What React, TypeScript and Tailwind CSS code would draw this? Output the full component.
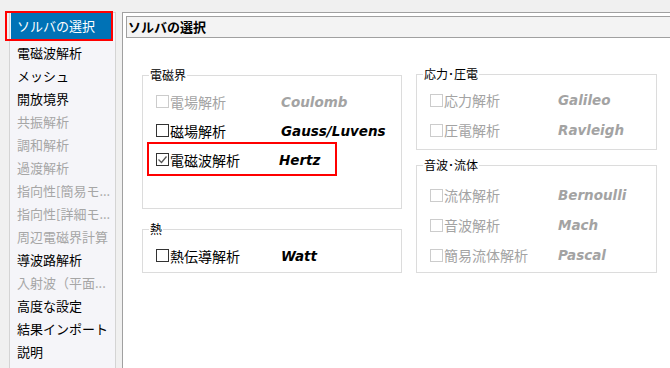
import React from "react";

const jp = { fontFamily: '"Noto Sans CJK JP", "Noto Sans", sans-serif' };
const latin = { fontFamily: '"DejaVu Sans", "Liberation Sans", sans-serif' };

type Item = { label: string; enabled: boolean };

const sideItems: Item[] = [
  { label: "電磁波解析", enabled: true },
  { label: "メッシュ", enabled: true },
  { label: "開放境界", enabled: true },
  { label: "共振解析", enabled: false },
  { label: "調和解析", enabled: false },
  { label: "過渡解析", enabled: false },
  { label: "指向性[簡易モ...", enabled: false },
  { label: "指向性[詳細モ...", enabled: false },
  { label: "周辺電磁界計算", enabled: false },
  { label: "導波路解析", enabled: true },
  { label: "入射波（平面...", enabled: false },
  { label: "高度な設定", enabled: true },
  { label: "結果インポート", enabled: true },
  { label: "説明", enabled: true },
];

function Checkbox({ enabled, checked }: { enabled: boolean; checked?: boolean }) {
  return (
    <span
      className={`w-[13px] h-[13px] shrink-0 border bg-white flex items-center justify-center ${
        enabled ? "border-[#333333]" : "border-[#cccccc]"
      }`}
    >
      {checked && (
        <svg width="11" height="11" viewBox="0 0 11 11">
          <polyline points="1.5,5.5 4.5,8.5 9.5,2.5" fill="none" stroke="#555555" strokeWidth="1.3" />
        </svg>
      )}
    </span>
  );
}

function Row({
  label,
  name,
  enabled,
  checked,
  labelW,
  h,
  children,
}: {
  label: string;
  name: string;
  enabled: boolean;
  checked?: boolean;
  labelW: number;
  h: string;
  children?: React.ReactNode;
}) {
  return (
    <div className={`relative flex items-center pl-[13px] ${h}`}>
      <Checkbox enabled={enabled} checked={checked} />
      <span
        className={`ml-[1px] text-[14px] leading-[18px] whitespace-nowrap ${enabled ? "text-black" : "text-[#a3a3a3]"}`}
        style={{ ...jp, width: labelW }}
      >
        {label}
      </span>
      <span
        className={`text-[13.5px] font-bold italic leading-[18px] whitespace-nowrap ${enabled ? "text-black" : "text-[#a3a3a3]"}`}
        style={latin}
      >
        {name}
      </span>
      {children}
    </div>
  );
}

function Group({
  title,
  className,
  children,
}: {
  title: string;
  className: string;
  children: React.ReactNode;
}) {
  return (
    <div className={`relative border border-[#dcdcdc] ${className}`}>
      <span
        className="absolute -top-[9px] left-[6px] bg-white px-[1px] text-[12px] leading-[16px] text-black"
        style={jp}
      >
        {title}
      </span>
      {children}
    </div>
  );
}

export default function App() {
  return (
    <div className="w-[670px] h-[368px] overflow-hidden bg-[#f0f0f0] flex" style={jp}>
      {/* Sidebar */}
      <div className="relative ml-[9px] mt-[12px] w-[107px] h-[400px] shrink-0 border border-[#d4d4d4] bg-[#f5f5f9] flex flex-col">
        <div className="ml-[1px] mr-[4px] h-[26px] bg-[#0072b6] text-white text-[13px] leading-[26px] pl-[6px] whitespace-nowrap">
          ソルバの選択
        </div>
        <div className="mt-[3px] flex flex-col">
          {sideItems.map((it) => (
            <div
              key={it.label}
              className={`h-[23px] leading-[22px] pl-[7px] text-[13px] whitespace-nowrap ${
                it.enabled ? "text-black" : "text-[#a6a6a6]"
              }`}
            >
              {it.label}
            </div>
          ))}
        </div>
        <div className="absolute -left-[5px] -top-[2px] w-[108px] h-[30px] border-2 border-[#ff0000]" />
      </div>

      {/* Main panel */}
      <div className="ml-[6px] mt-[12px] w-[600px] h-[400px] shrink-0 border-l border-t border-[#a0a0a0] bg-white pl-[3px] pt-[3px]">
        <div className="h-[22px] border border-[#a0a0a0] bg-[#f3f3f3] pl-[1px] text-[13px] font-bold leading-[20px] text-black">
          ソルバの選択
        </div>

        <div className="flex pl-[16px] mt-[37px] gap-[14px]">
          {/* Left column */}
          <div className="flex flex-col w-[260px]">
            <Group title="電磁界" className="h-[134px] pt-[11px]">
              <Row label="電場解析" name="Coulomb" enabled={false} labelW={111} h="h-[29px]" />
              <Row label="磁場解析" name="Gauss/Luvens" enabled labelW={111} h="h-[29px]" />
              <Row label="電磁波解析" name="Hertz" enabled checked labelW={109} h="h-[29px]">
                <div className="absolute -top-[3px] left-[4px] w-[190px] h-[34px] border-2 border-[#ff0000]" />
              </Row>
            </Group>
            <Group title="熱" className="mt-[20px] h-[44px] pt-[11px]">
              <Row label="熱伝導解析" name="Watt" enabled labelW={111} h="h-[29px]" />
            </Group>
          </div>

          {/* Right column */}
          <div className="flex flex-col w-[241px]">
            <Group title="応力･圧電" className="-mt-[1px] h-[76px] pt-[10px]">
              <Row label="応力解析" name="Galileo" enabled={false} labelW={114} h="h-[30px]" />
              <Row label="圧電解析" name="Ravleigh" enabled={false} labelW={114} h="h-[30px]" />
            </Group>
            <Group title="音波･流体" className="mt-[15px] h-[108px] pt-[14px]">
              <Row label="流体解析" name="Bernoulli" enabled={false} labelW={114} h="h-[30px]" />
              <Row label="音波解析" name="Mach" enabled={false} labelW={114} h="h-[30px]" />
              <Row label="簡易流体解析" name="Pascal" enabled={false} labelW={114} h="h-[30px]" />
            </Group>
          </div>
        </div>
      </div>
    </div>
  );
}
